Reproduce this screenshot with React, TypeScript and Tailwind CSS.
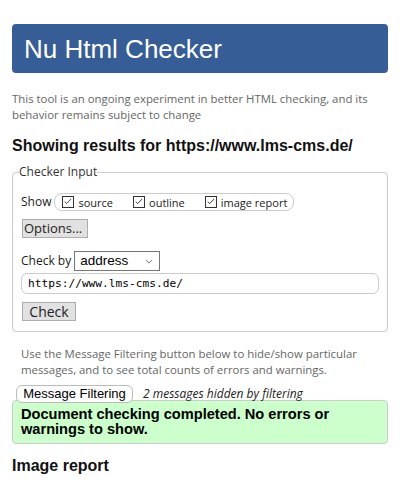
import React from "react"

const Box = ({ label, className = "" }: { label: string; className?: string }) => (
  <label className={`flex items-center whitespace-nowrap ${className}`}>
    <span className="relative w-[12px] h-[12px] border border-[#333] bg-white mr-[4px]">
      <svg viewBox="0 0 12 12" className="absolute inset-0 w-[10px] h-[10px]">
        <path d="M2 5.5 L4.5 8 L9.5 2.5" fill="none" stroke="#333" strokeWidth="1.1" />
      </svg>
    </span>
    <span className="text-[11px] leading-none text-[#222]">{label}</span>
  </label>
)

function App() {
  return (
    <div className="px-3 pt-6 bg-white min-h-[485px] font-['Open_Sans',sans-serif] text-[#222]">
      <div className="h-[49px] rounded-[4px] bg-[#365d95] flex items-center pl-3">
        <h1 className="font-['Liberation_Sans',Arial,sans-serif] text-[26px] text-white leading-none">Nu Html Checker</h1>
      </div>

      <p className="mt-[18px] text-[11.4px] leading-[16px] text-[#666]">
        This tool is an ongoing experiment in better HTML checking, and its behavior remains subject to change
      </p>

      <h2 className="mt-[13px] font-['Liberation_Sans',Arial,sans-serif] font-bold text-[16px] leading-[20px] text-[#111]">
        Showing results for https://www.lms-cms.de/
      </h2>

      <fieldset className="mt-[8px] border border-[#ccc] rounded-[4px] px-2 pb-[8px]">
        <legend className="-ml-[2px] text-[12px] leading-[16px] text-[#333]">Checker Input</legend>

        <div className="flex items-center mt-[13px]">
          <span className="text-[12px] mr-[3px]">Show</span>
          <div className="flex items-center h-[18px] border border-[#ccc] rounded-[8px] pl-[7px] pr-[6px]">
            <Box label="source" className="mr-[20px]" />
            <Box label="outline" className="mr-[20px]" />
            <Box label="image report" />
          </div>
        </div>

        <button className="mt-[8px] ml-[1px] h-[19px] w-[66px] bg-[#e1e1e1] border border-[#adadad] text-[13px] leading-none text-left pl-[1px]">
          Options...
        </button>

        <div className="flex items-center mt-[12px]">
          <span className="text-[12px] mr-[3px]">Check by</span>
          <div className="relative h-[20px] w-[86px] border border-[#767676] bg-white flex items-center pl-[5px]">
            <span className="font-['Liberation_Sans',Arial,sans-serif] text-[13.5px] leading-none text-black">address</span>
            <svg viewBox="0 0 10 6" className="absolute right-[6px] top-[7px] w-[8px] h-[5px]">
              <path d="M1 1 L5 5 L9 1" fill="none" stroke="#555" strokeWidth="1" />
            </svg>
          </div>
        </div>

        <div className="mt-[2px] h-[21px] w-[358px] border border-[#ccc] rounded-[6px] flex items-center pl-[6px]">
          <span className="font-['DejaVu_Sans_Mono',monospace] text-[11.2px] leading-none text-black">https://www.lms-cms.de/</span>
        </div>

        <button className="mt-[8px] ml-[1px] h-[19px] w-[54px] bg-[#e1e1e1] border border-[#adadad] text-[14px] leading-none">
          Check
        </button>
      </fieldset>

      <p className="mt-[14px] pl-[9px] text-[11.4px] leading-[16px] text-[#666]">
        Use the Message Filtering button below to hide/show particular messages, and to see total counts of errors and warnings.
      </p>

      <div className="relative z-10 flex items-center mt-[7px] ml-[4px]">
        <button className="h-[18px] w-[117px] bg-white border border-[#bbb] rounded-[6px] font-['Liberation_Sans',Arial,sans-serif] text-[13px] leading-none text-black">
          Message Filtering
        </button>
        <span className="ml-[10px] italic text-[12px] text-[#222]">2 messages hidden by filtering</span>
      </div>

      <div className="-mt-[3px] border border-[#ccc] rounded-[4px] bg-[#ccffcc] px-[8px] pt-[6px] pb-[6px]">
        <p className="font-['Liberation_Sans',Arial,sans-serif] font-bold text-[14.6px] leading-[15px] text-black">
          Document checking completed. No errors or warnings to show.
        </p>
      </div>

      <h2 className="mt-[12px] font-['Liberation_Sans',Arial,sans-serif] font-bold text-[16px] leading-[20px] text-[#111]">
        Image report
      </h2>
    </div>
  )
}

export default App
